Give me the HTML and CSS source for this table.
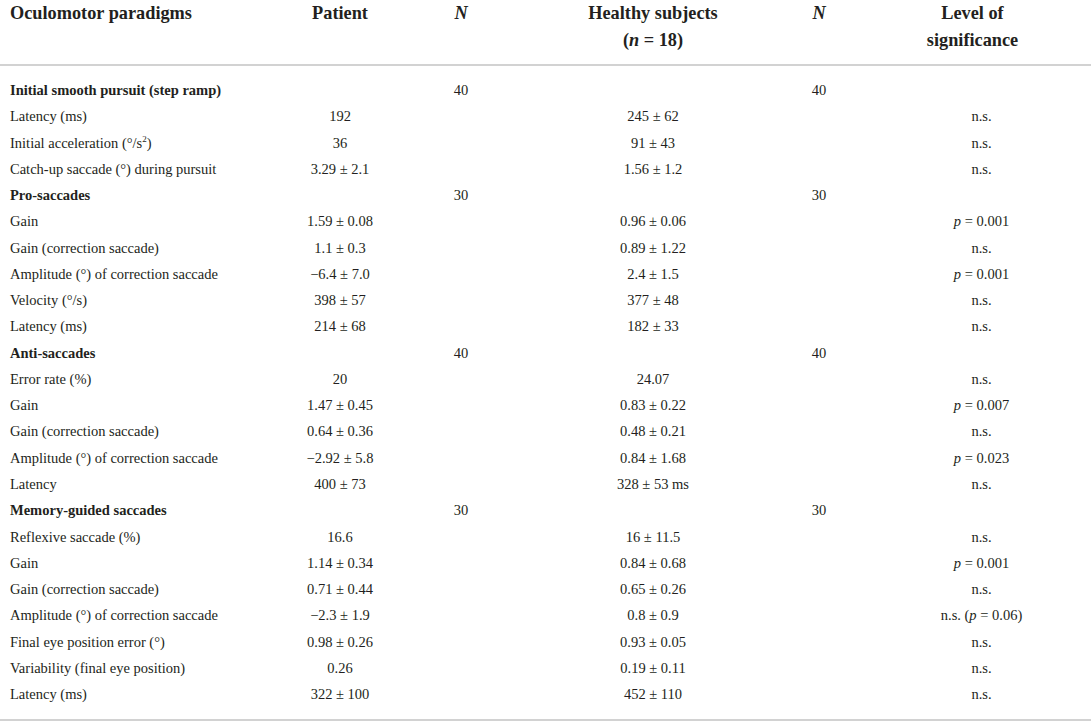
FILE: index.html
```html
<!DOCTYPE html>
<html>
<head>
    <title>Oculomotor paradigms</title>
    <link rel="stylesheet" href="styles.css">
</head>
<body>
    <table class="results">
        <colgroup>
            <col class="c-name">
            <col class="c-patient">
            <col class="c-n">
            <col class="c-healthy">
            <col class="c-n2">
            <col class="c-sig">
        </colgroup>
        <thead>
            <tr>
                <th class="name">Oculomotor paradigms</th>
                <th>Patient</th>
                <th><i>N</i></th>
                <th>Healthy subjects<br>(<i>n</i> = 18)</th>
                <th><i>N</i></th>
                <th>Level of<br>significance</th>
            </tr>
        </thead>
        <tbody>
            <!-- Initial smooth pursuit -->
            <tr class="group first">
                <td class="name">Initial smooth pursuit (step ramp)</td>
                <td></td><td>40</td><td></td><td>40</td><td></td>
            </tr>
            <tr><td class="name">Latency (ms)</td><td>192</td><td></td><td>245 ± 62</td><td></td><td class="sig">n.s.</td></tr>
            <tr><td class="name">Initial acceleration (°/s<sup>2</sup>)</td><td>36</td><td></td><td>91 ± 43</td><td></td><td class="sig">n.s.</td></tr>
            <tr><td class="name">Catch-up saccade (°) during pursuit</td><td>3.29 ± 2.1</td><td></td><td>1.56 ± 1.2</td><td></td><td class="sig">n.s.</td></tr>

            <!-- Pro-saccades -->
            <tr class="group">
                <td class="name">Pro-saccades</td>
                <td></td><td>30</td><td></td><td>30</td><td></td>
            </tr>
            <tr><td class="name">Gain</td><td>1.59 ± 0.08</td><td></td><td>0.96 ± 0.06</td><td></td><td class="sig"><i>p</i> = 0.001</td></tr>
            <tr><td class="name">Gain (correction saccade)</td><td>1.1 ± 0.3</td><td></td><td>0.89 ± 1.22</td><td></td><td class="sig">n.s.</td></tr>
            <tr><td class="name">Amplitude (°) of correction saccade</td><td>−6.4 ± 7.0</td><td></td><td>2.4 ± 1.5</td><td></td><td class="sig"><i>p</i> = 0.001</td></tr>
            <tr><td class="name">Velocity (°/s)</td><td>398 ± 57</td><td></td><td>377 ± 48</td><td></td><td class="sig">n.s.</td></tr>
            <tr><td class="name">Latency (ms)</td><td>214 ± 68</td><td></td><td>182 ± 33</td><td></td><td class="sig">n.s.</td></tr>

            <!-- Anti-saccades -->
            <tr class="group">
                <td class="name">Anti-saccades</td>
                <td></td><td>40</td><td></td><td>40</td><td></td>
            </tr>
            <tr><td class="name">Error rate (%)</td><td>20</td><td></td><td>24.07</td><td></td><td class="sig">n.s.</td></tr>
            <tr><td class="name">Gain</td><td>1.47 ± 0.45</td><td></td><td>0.83 ± 0.22</td><td></td><td class="sig"><i>p</i> = 0.007</td></tr>
            <tr><td class="name">Gain (correction saccade)</td><td>0.64 ± 0.36</td><td></td><td>0.48 ± 0.21</td><td></td><td class="sig">n.s.</td></tr>
            <tr><td class="name">Amplitude (°) of correction saccade</td><td>−2.92 ± 5.8</td><td></td><td>0.84 ± 1.68</td><td></td><td class="sig"><i>p</i> = 0.023</td></tr>
            <tr><td class="name">Latency</td><td>400 ± 73</td><td></td><td>328 ± 53 ms</td><td></td><td class="sig">n.s.</td></tr>

            <!-- Memory-guided saccades -->
            <tr class="group">
                <td class="name">Memory-guided saccades</td>
                <td></td><td>30</td><td></td><td>30</td><td></td>
            </tr>
            <tr><td class="name">Reflexive saccade (%)</td><td>16.6</td><td></td><td>16 ± 11.5</td><td></td><td class="sig">n.s.</td></tr>
            <tr><td class="name">Gain</td><td>1.14 ± 0.34</td><td></td><td>0.84 ± 0.68</td><td></td><td class="sig"><i>p</i> = 0.001</td></tr>
            <tr><td class="name">Gain (correction saccade)</td><td>0.71 ± 0.44</td><td></td><td>0.65 ± 0.26</td><td></td><td class="sig">n.s.</td></tr>
            <tr><td class="name">Amplitude (°) of correction saccade</td><td>−2.3 ± 1.9</td><td></td><td>0.8 ± 0.9</td><td></td><td class="sig">n.s. (<i>p</i> = 0.06)</td></tr>
            <tr><td class="name">Final eye position error (°)</td><td>0.98 ± 0.26</td><td></td><td>0.93 ± 0.05</td><td></td><td class="sig">n.s.</td></tr>
            <tr><td class="name">Variability (final eye position)</td><td>0.26</td><td></td><td>0.19 ± 0.11</td><td></td><td class="sig">n.s.</td></tr>
            <tr class="last"><td class="name">Latency (ms)</td><td>322 ± 100</td><td></td><td>452 ± 110</td><td></td><td class="sig">n.s.</td></tr>
        </tbody>
    </table>
</body>
</html>
```

FILE: styles.css
```css
body {
    margin: 0;
    padding: 0;
    background: #fff;
    color: #231f20;
    font-family: 'Liberation Serif', 'Times New Roman', serif;
}

/* Table */
.results {
    width: 1091px;
    border-collapse: collapse;
    table-layout: fixed;
}
.c-name    { width: 280px; }
.c-patient { width: 120px; }
.c-n       { width: 122px; }
.c-healthy { width: 262px; }
.c-n2      { width: 70px; }
.c-sig     { width: 237px; }

.results th,
.results td {
    padding: 0;
    text-align: center;
    white-space: nowrap;
}
.results .name {
    text-align: left;
    padding-left: 10px;
}

/* Header */
.results thead th {
    font-size: 18.3px;
    font-weight: bold;
    line-height: 27px;
    vertical-align: top;
    padding-bottom: 10px;
    border-bottom: 2px solid #d2d2d2;
}
.results thead th i {
    font-weight: bold;
}

/* Body rows */
.results tbody td {
    font-size: 14.5px;
    line-height: 26.26px;
    height: 26.26px;
}
.results tbody .group .name {
    font-weight: bold;
}
.results tbody .first td {
    padding-top: 11px;
}
.results tbody .last td {
    padding-bottom: 12px;
    border-bottom: 2px solid #d2d2d2;
}
.results td.sig {
    padding-left: 18px;
}
.results sup {
    font-size: 9px;
    line-height: 0;
}
```
